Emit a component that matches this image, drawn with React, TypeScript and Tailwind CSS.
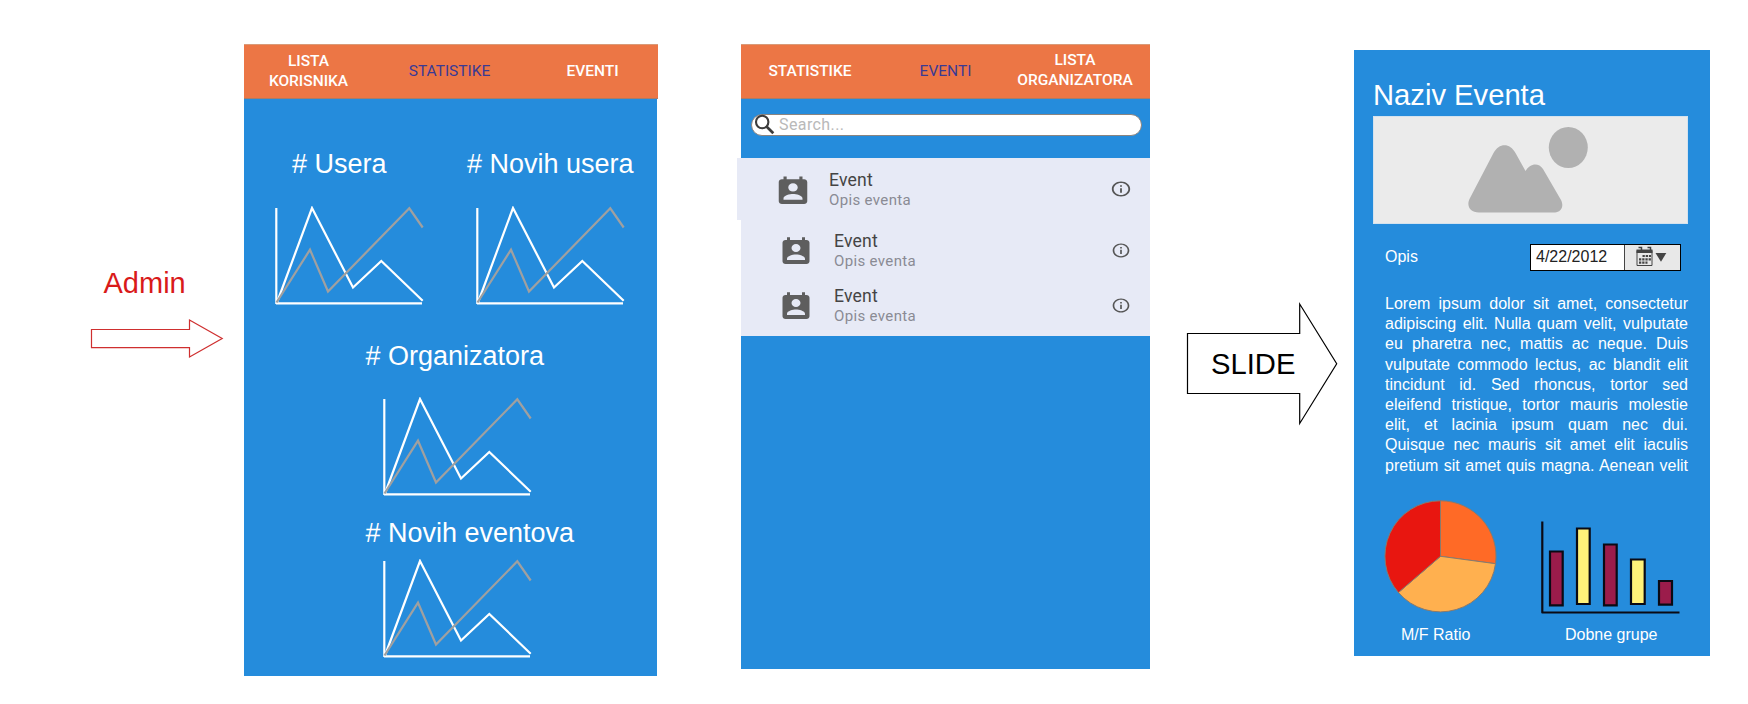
import React from "react";

function LineChart() {
  return (
    <svg width="150" height="100" viewBox="0 0 150 100" fill="none" strokeWidth="2.2" className="block">
      <path d="M1.3 2V98" stroke="#fff" strokeWidth="2.2" />
      <path d="M1 97.4H147" stroke="#fff" strokeWidth="2.4" />
      <path d="M2 96.5L37 2L78 81.5L106.3 55L147.7 94.7" stroke="#fff" />
      <path d="M1.5 96.5L35 43.7L53 85.5L134.3 2.3L147.7 21.5" stroke="#a0a0a0" />
    </svg>
  );
}

function Nav({ children, className }: { children: React.ReactNode; className: string }) {
  return (
    <nav
      className={`flex h-[55px] items-center border-b border-t border-t-[#d99a78] border-b-[#a87c68] bg-[#ec7645] pb-0.5 text-center font-['Roboto',sans-serif] text-[15.5px] leading-5 font-medium text-white ${className}`}
    >
      {children}
    </nav>
  );
}

function SearchIcon() {
  return (
    <svg width="26" height="26" viewBox="0 0 26 26" fill="none" stroke="#3c3c3c" className="block shrink-0">
      <circle cx="10.2" cy="10" r="6.2" strokeWidth="2.1" />
      <path d="M14.500 14.500L21.300 21.300" strokeWidth="2.700" />
    </svg>
  );
}

function ContactIcon({ className }: { className: string }) {
  return (
    <svg viewBox="0 0 24 24" preserveAspectRatio="none" fill="#5e5e5e" className={`block shrink-0 ${className}`}>
      <path d="M19 3h-1V1h-2v2H8V1H6v2H5c-1.11 0-2 .9-2 2v14c0 1.1.89 2 2 2h14c1.1 0 2-.9 2-2V5c0-1.1-.9-2-2-2zm-7 3c1.66 0 3 1.34 3 3s-1.34 3-3 3-3-1.34-3-3 1.34-3 3-3zm6 12H6v-1c0-2 4-3.1 6-3.1s6 1.1 6 3.1v1z" />
    </svg>
  );
}

function InfoIcon({ className }: { className: string }) {
  return (
    <svg viewBox="0 0 24 24" preserveAspectRatio="none" fill="#555" className={`block shrink-0 ${className}`}>
      <path d="M11 17h2v-6h-2v6zm1-15C6.48 2 2 6.48 2 12s4.48 10 10 10 10-4.48 10-10S17.52 2 12 2zm0 18c-4.41 0-8-3.59-8-8s3.59-8 8-8 8 3.59 8 8-3.59 8-8 8zM11 9h2V7h-2v2z" />
    </svg>
  );
}

function EventText({ className }: { className: string }) {
  return (
    <div className={`flex-1 font-['Roboto',sans-serif] whitespace-nowrap ${className}`}>
      <div className="text-[17.6px] leading-5 tracking-[0.2px] text-[#444]">Event</div>
      <div className="text-[15px] leading-5 tracking-[0.35px] text-[#8a8b94]">Opis eventa</div>
    </div>
  );
}

const lorem = [
  "Lorem ipsum dolor sit amet, consectetur",
  "adipiscing elit. Nulla quam velit, vulputate",
  "eu pharetra nec, mattis ac neque. Duis",
  "vulputate commodo lectus, ac blandit elit",
  "tincidunt id. Sed rhoncus, tortor sed",
  "eleifend tristique, tortor mauris molestie",
  "elit, et lacinia ipsum quam nec dui.",
  "Quisque nec mauris sit amet elit iaculis",
  "pretium sit amet quis magna. Aenean velit",
];

export default function App() {
  return (
    <div className="flex h-[704px] w-[1748px] items-start overflow-hidden bg-white font-['Liberation_Sans',sans-serif]">
      <div className="w-[244px] shrink-0 pt-[267px]">
        <div className="ml-[103.500px] text-[29px] leading-8 text-[#d91a1a]">Admin</div>
        <svg width="140" height="44" viewBox="0 0 140 44" className="mt-[17px] ml-[88px] block" fill="none" stroke="#cf2f2f" strokeWidth="1.2">
          <path d="M3.5 13.5H101.5V4L134.2 22.6L101.5 41V31.7H3.5Z" />
        </svg>
      </div>

      <section className="mt-11 h-[632px] w-[413px] shrink-0 bg-[#258cdc]">
        <Nav className="w-[414px]">
          <div className="w-[129px]">LISTA<br />KORISNIKA</div>
          <div className="w-[153px] font-normal text-[#3a3a94]">STATISTIKE</div>
          <div className="w-[132px] pl-px">EVENTI</div>
        </Nav>
        <div className="flex pt-[50px] text-[27px] leading-[30px] whitespace-nowrap text-white">
          <div className="w-[222px]">
            <div className="ml-[48px]"># Usera</div>
            <div className="mt-[27px] ml-[31px]"><LineChart /></div>
          </div>
          <div>
            <div className="ml-px"># Novih usera</div>
            <div className="mt-[27px] ml-[10px]"><LineChart /></div>
          </div>
        </div>
        <div className="text-[27px] leading-[30px] whitespace-nowrap text-white">
          <div className="mt-[35px] ml-[121.500px]"># Organizatora</div>
          <div className="mt-[26px] ml-[139px]"><LineChart /></div>
          <div className="mt-[21px] ml-[121.500px]"># Novih eventova</div>
          <div className="mt-[11px] ml-[139px]"><LineChart /></div>
        </div>
      </section>

      <section className="mt-11 ml-[84px] h-[625px] w-[409px] shrink-0 bg-[#258cdc]">
        <Nav className="w-[409px]">
          <div className="w-[138px]">STATISTIKE</div>
          <div className="w-[133px] font-normal text-[#3a3a94]">EVENTI</div>
          <div className="w-[126px] pb-0.5">LISTA<br />ORGANIZATORA</div>
        </Nav>
        <div className="mt-[15px] ml-[10px] flex h-[22px] w-[391px] items-center rounded-full border border-[#8a8480] bg-white">
          <SearchIcon />
          <span className="ml-px font-['Roboto',sans-serif] text-[16px] leading-5 tracking-[0.4px] text-[#b9b9b9]">Search...</span>
        </div>
        <div className="mt-[22px] h-[178px] bg-[#e7eaf6]">
          <div className="-ml-1 flex h-[62px] w-[413px] items-start bg-[#e7eaf6]">
            <ContactIcon className="mt-[17px] ml-[37px] h-[33px] w-[38px]" />
            <EventText className="mt-[12px] ml-[17px]" />
            <InfoIcon className="mt-[22px] mr-[18px] h-[18px] w-[22px]" />
          </div>
          <div className="flex h-[56px] items-start">
            <ContactIcon className="mt-[16px] ml-[37px] h-[32px] w-[36px]" />
            <EventText className="mt-[11px] ml-[20px]" />
            <InfoIcon className="mt-[22px] mr-[19px] h-[17px] w-[20px]" />
          </div>
          <div className="flex h-[60px] items-start">
            <ContactIcon className="mt-[15px] ml-[37px] h-[32px] w-[36px]" />
            <EventText className="mt-[10px] ml-[20px]" />
            <InfoIcon className="mt-[21px] mr-[19px] h-[17px] w-[20px]" />
          </div>
        </div>
      </section>

      <div className="mt-[300px] ml-[34px] grid h-[128px] w-[158px] shrink-0">
        <svg width="158" height="128" viewBox="0 0 158 128" className="col-start-1 row-start-1 block" fill="none" stroke="#000" strokeWidth="1.2">
          <path d="M3.5 33.5H115.7V4L152.7 63.7L115.7 123.5V93.5H3.5Z" />
        </svg>
        <div className="col-start-1 row-start-1 mt-[48px] ml-[27px] text-[29.2px] leading-8 text-black">SLIDE</div>
      </div>

      <section className="mt-[50px] ml-[12px] h-[606px] w-[356px] shrink-0 bg-[#258cdc] text-[16px] leading-5 text-white">
        <h1 className="pt-[29px] pl-[19px] text-[29.2px] leading-8">Naziv Eventa</h1>
        <div className="mt-[5px] ml-[19px] h-[108px] w-[315px] border border-[#d4e2ee] bg-[#ebebeb]">
          <svg width="313" height="106" viewBox="0 0 313 106" fill="#b1b1b1" className="block">
            <ellipse cx="194.3" cy="30.5" rx="19.5" ry="20.5" />
            <path d="M96 81L119.5 36C125 25.500 136 25.500 141.500 36L151.500 54C155.500 47 164 44.500 169 52L187 83C190.500 90 186.500 95.500 181 95.500H105C95.500 95.500 92 88 96 81Z" />
          </svg>
        </div>
        <div className="mt-[20px] flex pl-[31px]">
          <div className="mt-[3px] w-[145px]">Opis</div>
          <div className="flex h-[27px] w-[151px] border border-black bg-white text-[#222]">
            <div className="w-[93px] pt-[2px] pl-[5px]">4/22/2012</div>
            <div className="flex-1 border-l border-[#444] bg-[#e8e8e8]">
              <svg width="55" height="25" viewBox="0 0 55 25" className="block">
                <path d="M12 5.500H27V20.500H12Z" fill="none" stroke="#444" />
                <path d="M11.500 4.500H27.500V8H11.500Z" fill="#444" />
                <path d="M13.500 2.500H16.500V5M22.500 2.500H25.500V5" fill="none" stroke="#444" strokeWidth="1.500" />
                <path d="M17.500 11H26M14 14.300H26M14 17.600H22.500" stroke="#444" strokeWidth="2.200" strokeDasharray="2.300 0.900" />
                <path d="M30.500 8H41.300L36 16.800Z" fill="#444" />
              </svg>
            </div>
          </div>
        </div>
        <div className="mt-[23px] ml-[31px] w-[303px] leading-[20.2px]">
          {lorem.map((line) => (
            <p key={line} className="text-justify whitespace-nowrap [text-align-last:justify]">{line}</p>
          ))}
        </div>
        <div className="mt-[23px] flex pl-[30px]">
          <svg width="114" height="114" viewBox="0 0 114 114" stroke="#8a7a6c" strokeWidth="1" className="block">
            <path d="M56.500 57.300V1.800A55.500 55.500 0 0 1 111.500 64.700Z" fill="#ff6a26" />
            <path d="M56.500 57.300L111.500 64.700A55.500 55.500 0 0 1 14.400 93.500Z" fill="#ffb04f" />
            <path d="M56.500 57.300L14.400 93.500A55.500 55.500 0 0 1 56.500 1.800Z" fill="#e81610" />
          </svg>
          <svg width="144" height="100" viewBox="0 0 144 100" stroke="#0a0a14" strokeWidth="2.2" className="mt-[20px] ml-[42px] block">
            <path d="M2.300 2.500V93.500H139.500" fill="none" strokeLinejoin="round" />
            <path d="M10 32.500H22.700V86.300H10ZM64 25.500H76.700V86.300H64ZM119 62H132V85.600H119Z" fill="#9b1c4b" />
            <path d="M37 9.500H49.700V85H37ZM91 40.500H104.700V85H91Z" fill="#fff27a" />
          </svg>
        </div>
        <div className="mt-[6px] flex">
          <div className="ml-[47px] w-[164px]">M/F Ratio</div>
          <div>Dobne grupe</div>
        </div>
      </section>
    </div>
  );
}
